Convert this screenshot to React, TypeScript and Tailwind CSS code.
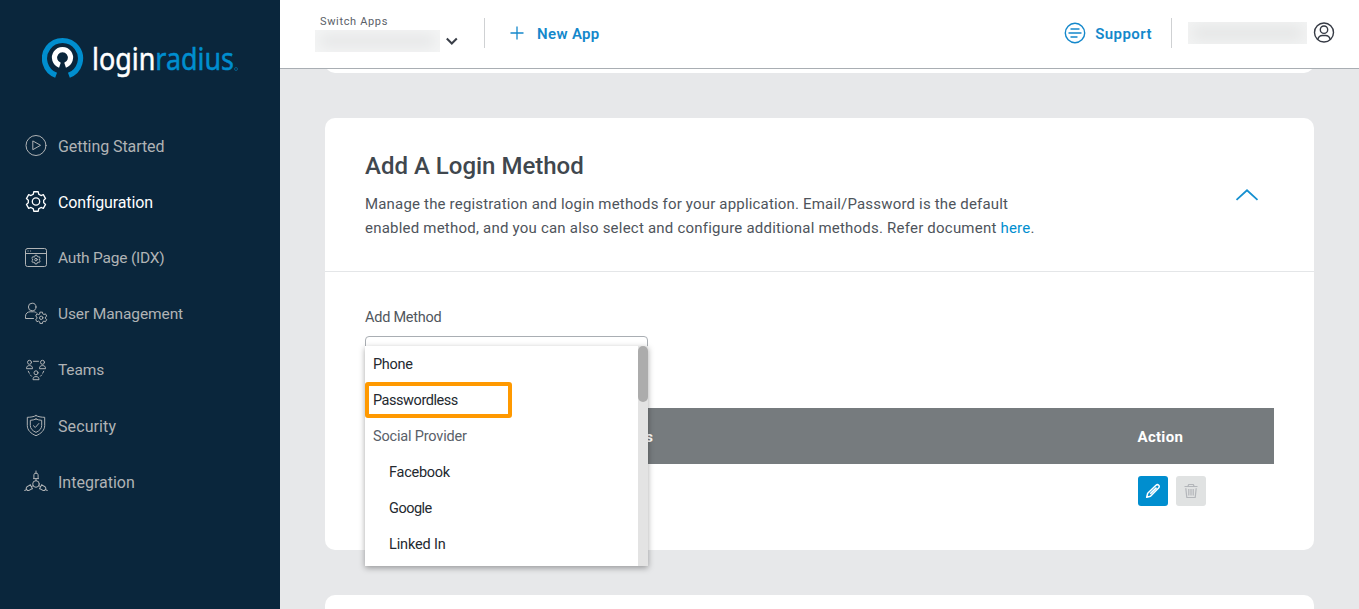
import React from "react";

type IconProps = { className?: string };

function gearPath(cx: number, cy: number, outer: number, inner: number): string {
  const points: string[] = [];
  for (let tooth = 0; tooth < 6; tooth++) {
    const base = tooth * 60 - 90;
    const corners: [number, number][] = [
      [base - 20, inner],
      [base - 13, outer],
      [base + 13, outer],
      [base + 20, inner],
    ];
    corners.forEach(([deg, r]) => {
      const a = (deg * Math.PI) / 180;
      points.push(`${(cx + r * Math.cos(a)).toFixed(2)} ${(cy + r * Math.sin(a)).toFixed(2)}`);
    });
  }
  return `M${points.join("L")}Z`;
}

function Line({ className, children, width = 1 }: IconProps & { children: React.ReactNode; width?: number }) {
  return (
    <svg
      viewBox="0 0 24 24"
      className={`size-6 shrink-0 ${className ?? ""}`}
      fill="none"
      stroke="currentColor"
      strokeWidth={width}
      strokeLinecap="round"
      strokeLinejoin="round"
    >
      {children}
    </svg>
  );
}

const PlayIcon = () => (
  <Line>
    <circle cx="12" cy="11.5" r="10" />
    <path d="M8.8 7.3v8.4l7.4-4.2z" />
  </Line>
);

const GearIcon = () => (
  <Line width={1.3}>
    <path d={gearPath(12, 11.5, 10, 7.8)} />
    <circle cx="12" cy="11.5" r="3.7" />
  </Line>
);

const AuthIcon = () => (
  <Line>
    <rect x="1.5" y="2.5" width="21" height="18" rx="2" />
    <path d="M1.5 7.5h21" />
    <path d="M4 5h.2M6.5 5h.2" />
    <path d={gearPath(12, 13.6, 4.4, 3.4)} />
    <circle cx="12" cy="13.6" r="1.3" />
  </Line>
);

const UserGearIcon = () => (
  <Line>
    <circle cx="8.2" cy="5" r="3.8" />
    <path d="M9.5 16.5h-8v-2.3c0-3 2.4-4.4 4.6-4.4h3.4c1.3 0 2.1.3 2.9 1" />
    <path d={gearPath(17.2, 15.8, 5.8, 4.3)} />
    <circle cx="17.2" cy="15.8" r="1.7" />
  </Line>
);

const TeamsIcon = () => (
  <Line>
    <circle cx="5.5" cy="4.3" r="2" />
    <path d="M2.5 10.3c0-2 1.1-2.7 3-2.7s3 .7 3 2.7z" />
    <circle cx="18.5" cy="4.3" r="2" />
    <path d="M15.5 10.3c0-2 1.1-2.7 3-2.7s3 .7 3 2.7z" />
    <circle cx="12" cy="14.8" r="2" />
    <path d="M9 21.3c0-2 1.1-2.7 3-2.7s3 .7 3 2.7z" />
    <path d="M9.5 3.3h5M4.3 13.2l1 2M6.4 17l1.1 1.2M19.7 13.2l-1 2M17.6 17l-1.1 1.2" />
  </Line>
);

const ShieldIcon = () => (
  <Line>
    <path d="M12 1.6c2.4 1.2 5.6 1.7 8.7 1.7v8.2c0 4.6-3.4 8-8.7 10.2-5.3-2.2-8.7-5.6-8.7-10.2V3.3c3.1 0 6.3-.5 8.7-1.7z" />
    <path d="M12 5c1.7.8 3.7 1.2 5.7 1.3v5.2c0 3-2.2 5.3-5.7 6.9-3.5-1.6-5.7-3.9-5.7-6.9V6.3C8.3 6.2 10.3 5.8 12 5z" />
    <path d="M9.4 11.7l1.9 1.8 3.5-4" />
  </Line>
);

const IntegrationIcon = () => (
  <Line>
    <circle cx="12" cy="14" r="3.3" />
    {[0, 120, 240].map((deg) => (
      <g key={deg} transform={`rotate(${deg} 12 14)`}>
        <path d="M12 10.7V8.8M9.6 8.6h4.8M9.9 8.6V4.8l.8-1.5h2.6l.8 1.5v3.8M12 3.3V1" />
      </g>
    ))}
  </Line>
);

const navItems = [
  { label: "Getting Started", icon: PlayIcon, tracking: "text-[16px] tracking-[-0.07px]" },
  { label: "Configuration", icon: GearIcon, active: true, tracking: "text-[16px] tracking-[-0.12px]" },
  { label: "Auth Page (IDX)", icon: AuthIcon, tracking: "text-[15.5px] tracking-[-0.2px]" },
  { label: "User Management", icon: UserGearIcon, tracking: "text-[15.5px] tracking-[-0.11px]" },
  { label: "Teams", icon: TeamsIcon, tracking: "text-[15.5px] tracking-[-0.15px]" },
  { label: "Security", icon: ShieldIcon, tracking: "text-[16px] tracking-[0.1px]" },
  { label: "Integration", icon: IntegrationIcon, tracking: "text-[16px]" },
];

function Logo() {
  return (
    <svg viewBox="0 0 210 52" className="h-[52px] w-[210px]" aria-label="loginradius">
      <path d="M14.1 38.3A18 18 0 1 1 26.9 38.3" fill="none" stroke="#008ecf" strokeWidth="5.2" />
      <path d="M17.9 28.2A8 8 0 1 1 23.1 28.2" fill="none" stroke="#fff" strokeWidth="5.2" />
      <text
        x="50"
        y="33.4"
        fontFamily="Noto Sans"
        fontSize="31"
        fill="#fff"
        stroke="#fff"
        strokeWidth="0.5"
        textLength="142"
        lengthAdjust="spacingAndGlyphs"
      >
        login
        <tspan fill="#008ecf" stroke="#008ecf">
          radius
        </tspan>
      </text>
      <circle cx="194" cy="32" r="1.5" fill="none" stroke="#008ecf" strokeWidth=".5" />
    </svg>
  );
}

function Sidebar() {
  return (
    <aside className="flex w-[280px] shrink-0 flex-col bg-[#0a263c]">
      <div className="h-[89px] pt-[37px] pl-[42px]">
        <Logo />
      </div>
      <nav className="mt-[29px] flex flex-col">
        {navItems.map(({ label, icon: Icon, active, tracking }) => (
          <a
            key={label}
            className={`flex h-14 items-center gap-2.5 pl-6 ${tracking} ${active ? "text-white" : "text-[#b0b3b5]"}`}
          >
            <Icon />
            <span className="pt-0.5">{label}</span>
          </a>
        ))}
      </nav>
    </aside>
  );
}

function Header() {
  return (
    <header className="z-10 flex h-[69px] shrink-0 items-start border-b border-[#a9aeb3] bg-white">
      <div className="ml-[35px] w-[145px] pt-[15px]">
        <div className="pl-[5px] text-[11px] leading-[14px] tracking-[0.65px] text-[#5a6067]">Switch Apps</div>
        <div className="mt-px flex items-center gap-[5px]">
          <div className="h-[22px] w-[125px] shrink-0 bg-[#e4e5e6] shadow-[inset_0_0_14px_5px_#f4f5f5]" />
          <svg viewBox="0 0 14 10" className="h-2.5 w-3.5" fill="none" stroke="#3a3f48" strokeWidth="2">
            <path d="M1.8 2.5l5 5 5-5" />
          </svg>
        </div>
      </div>
      <div className="mt-[18px] ml-6 h-[30px] w-px bg-[#cfd1d3]" />
      <a className="mt-[22px] ml-[25px] flex items-center gap-[13px] text-[15px] font-semibold tracking-[0.35px] text-[#1488cb]">
        <svg viewBox="0 0 14 14" className="-mt-0.5 size-3.5" stroke="currentColor" strokeWidth="1.3">
          <path d="M7 .5v13M.5 7h13" />
        </svg>
        <span className="pt-px">New App</span>
      </a>
      <div className="ml-auto flex items-start pr-6">
        <a className="mt-[22px] flex items-center gap-[9px] text-[15px] font-semibold tracking-[0.45px] text-[#1488cb]">
          <svg viewBox="0 0 22 22" className="-mt-px size-[22px]" fill="none" stroke="currentColor" strokeWidth="1.4" strokeLinecap="round">
            <circle cx="11" cy="11" r="9.7" />
            <path d="M7 7h8M5 11h12M7 15h6" />
          </svg>
          <span className="pt-px">Support</span>
        </a>
        <div className="mt-[18px] ml-[19px] h-[30px] w-px bg-[#cfd1d3]" />
        <div className="mt-[22px] ml-4 h-[22px] w-[119px] bg-[#e3e4e4] shadow-[inset_0_0_14px_5px_#f2f3f3]" />
        <svg viewBox="0 0 22 22" className="mt-[21px] ml-1.5 size-[22px]" fill="none" stroke="#363b45" strokeWidth="1.4">
          <circle cx="11" cy="11.5" r="9.5" />
          <circle cx="11" cy="8.7" r="3.7" />
          <path d="M4.8 18.5c.6-2.5 2.5-4 4.6-4h3.2c2.1 0 4 1.5 4.6 4" />
        </svg>
      </div>
    </header>
  );
}

const methods = [
  { label: "Phone", style: "pt-0.5 pl-2 text-[#24292f] tracking-[-0.3px]" },
  { label: "Passwordless", style: "pt-0.5 pl-1 text-[#24292f] tracking-[-0.45px]", marked: true },
  { label: "Social Provider", style: "pt-0.5 pl-2 text-[#596069] tracking-[-0.18px]" },
  { label: "Facebook", style: "pt-0.5 pl-6 text-[#24292f] tracking-[-0.25px]" },
  { label: "Google", style: "pt-0.5 pl-6 text-[#24292f] tracking-[-0.5px]" },
  { label: "Linked In", style: "pt-0.5 pl-6 text-[#24292f] tracking-[-0.15px]" },
];

function MethodMenu() {
  return (
    <div className="absolute top-[9px] -left-px flex h-[220px] w-[283px] bg-white shadow-[0_2px_6px_rgba(0,0,0,0.35)]">
      <ul className="flex-1 text-[14.5px]">
        {methods.map(({ label, style, marked }) => (
          <li
            key={label}
            className={`flex h-9 items-center ${style} ${marked ? "w-[147px] rounded-[3px] border-4 border-[#ff9900]" : ""}`}
          >
            {label}
          </li>
        ))}
      </ul>
      <div className="w-2.5 bg-[#e3e3e3]">
        <div className="h-14 rounded-full bg-[#acacac]" />
      </div>
    </div>
  );
}

function LoginMethodCard() {
  return (
    <section className="h-[432px] shrink-0 rounded-[10px] bg-white">
      <div className="flex h-[154px] justify-between border-b border-[#e4e6e8] pt-[31px] pr-[55px] pl-10">
        <div className="w-[700px]">
          <h2 className="text-[24px] leading-[35px] font-medium text-[#40474e]">Add A Login Method</h2>
          <p className="mt-2 text-[15px] leading-6 text-[#4e545b]">
            <span className="block whitespace-nowrap tracking-[0.18px]">
              Manage the registration and login methods for your application. Email/Password is the default
            </span>
            <span className="block whitespace-nowrap tracking-[0.215px]">
              enabled method, and you can also select and configure additional methods. Refer document{" "}
              <a className="text-[#008ecf]">here</a>.
            </span>
          </p>
        </div>
        <svg viewBox="0 0 24 14" className="mt-[39px] h-3.5 w-6" fill="none" stroke="#1590d0" strokeWidth="1.8">
          <path d="M1.5 11.8L12 2.3l10.5 9.5" />
        </svg>
      </div>
      <div className="px-10 pt-[35px]">
        <div className="text-[14.5px] leading-[22px] tracking-[-0.25px] text-[#50565d]">Add Method</div>
        <div className="relative mt-[7px] h-[40px] w-[283px] rounded-[4px] border border-[#a9aeb3]">
          <MethodMenu />
        </div>
        <div className="mt-8 flex h-14 items-center bg-[#767b7e] pt-0.5 text-[15px] font-bold tracking-[0.3px] text-white">
          <div className="w-[772.5px] pl-[243px]">Status</div>
          <div>Action</div>
        </div>
        <div className="mt-3 ml-[773px] flex gap-2">
          <button className="flex size-[30px] items-center justify-center rounded-[3px] bg-[#008ecf]">
            <svg viewBox="0 0 16 16" className="size-4" fill="none" stroke="#fff" strokeWidth="1.5" strokeLinejoin="round">
              <path d="M1.7 14.3l1-4 8.3-8c1-.9 2-.7 2.7 0s.8 1.8-.1 2.7l-8.1 8.2zM5.2 10.9l6.3-6.3" />
            </svg>
          </button>
          <button className="flex size-[30px] items-center justify-center rounded-[3px] bg-[#e0e2e2]">
            <svg viewBox="0 0 16 16" className="mr-px size-4" fill="none" stroke="#b3b6ba" strokeWidth="1.2" strokeLinejoin="round">
              <path d="M1.5 3.5h13M5 3.3l.7-1.8h4.6l.7 1.8M2.8 5.2l1 9.3h8.4l1-9.3M5.8 6v6.5M8 6v6.5M10.2 6v6.5" />
            </svg>
          </button>
        </div>
      </div>
    </section>
  );
}

export default function App() {
  return (
    <div className="flex h-[609px] w-[1359px] overflow-hidden bg-[#e7e8ea] font-['Roboto',sans-serif]">
      <Sidebar />
      <div className="flex min-w-0 flex-1 flex-col">
        <Header />
        <main className="flex min-h-0 flex-1 flex-col gap-[45px] overflow-hidden pr-[45px] pl-[45px]">
          <div className="flex h-1 shrink-0 flex-col justify-end overflow-hidden">
            <section className="h-20 shrink-0 rounded-[10px] bg-white" />
          </div>
          <LoginMethodCard />
          <section className="h-20 shrink-0 rounded-[10px] bg-white" />
        </main>
      </div>
    </div>
  );
}
